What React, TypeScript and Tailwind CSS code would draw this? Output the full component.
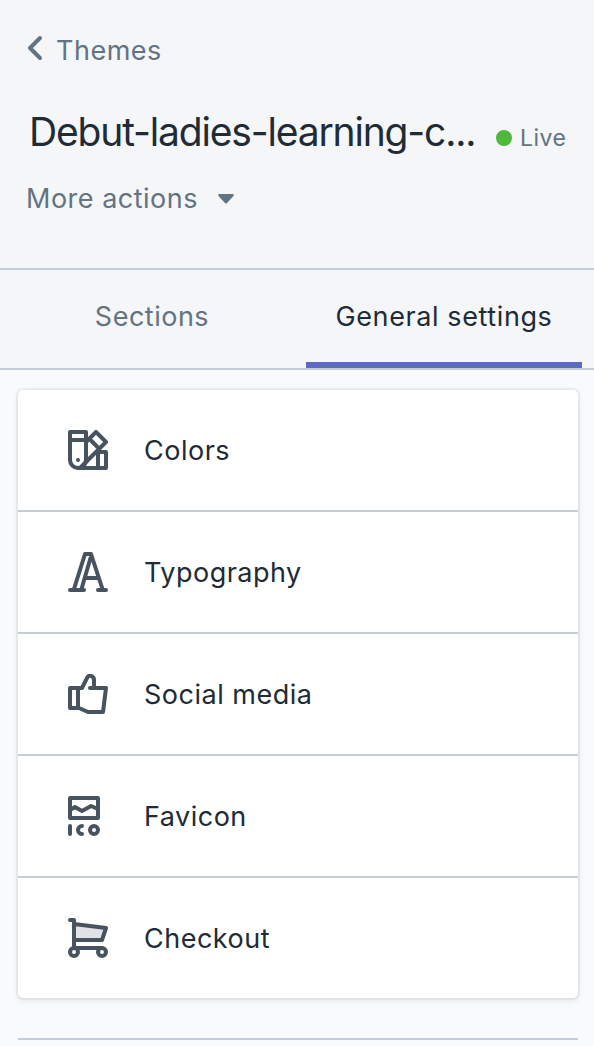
import type { ReactNode } from "react";

const iconProps = {
  width: 40,
  height: 40,
  viewBox: "0 0 40 40",
  fill: "none",
  stroke: "#47535f",
  strokeWidth: 4,
  strokeLinecap: "round" as const,
  strokeLinejoin: "round" as const,
  "aria-hidden": true,
};

const ColorsIcon = () => (
  <svg {...iconProps}>
    <path d="M2 2h16v28a8 8 0 0 1-8 8a8 8 0 0 1-8-8z" />
    <path d="M2 10h16M10 38h28V22h-8M30 22v16" />
    <path d="M18 12L28 2l10 10L14 36M21 8.500l10 10" />
    <circle cx="10" cy="30" r="2" fill="#47535f" stroke="none" />
  </svg>
);

const TypographyIcon = () => (
  <svg {...iconProps}>
    <path d="M2 38h14M30 38h8M6 37L17 2h6L34.500 37M13.500 37L22.500 6M18 26h12" />
  </svg>
);

const ThumbIcon = () => (
  <svg {...iconProps}>
    <path d="M2 14h12l5-10c2-4 7-2 7 2v8M10 14v20M2 14v20h9l9 4h15l3-24H22" />
  </svg>
);

const FaviconIcon = () => (
  <svg {...iconProps}>
    <path d="M2 2h28v20H2zM2 14l5-3 7 4 9-5 7 3M2 30v8M14 30a4 4 0 0 0 0 8" />
    <circle cx="26" cy="34" r="4" />
  </svg>
);

const CartIcon = () => (
  <svg {...iconProps}>
    <path d="M6 6l32 4-4 12H6z" fill="#dfe3e8" />
    <path d="M2 2h4v28M6 30h28" />
    <circle cx="6" cy="34" r="4" fill="white" />
    <circle cx="34" cy="34" r="4" fill="white" />
  </svg>
);

const settings: { label: string; icon: ReactNode }[] = [
  { label: "Colors", icon: <ColorsIcon /> },
  { label: "Typography", icon: <TypographyIcon /> },
  { label: "Social media", icon: <ThumbIcon /> },
  { label: "Favicon", icon: <FaviconIcon /> },
  { label: "Checkout", icon: <CartIcon /> },
];

export default function App() {
  return (
    <div className="flex h-[1046px] w-[594px] flex-col overflow-hidden bg-[#f9fafc] font-[Inter,sans-serif] text-[27px] leading-[40px] tracking-[0.5px] text-[#212b36]">
      <header className="flex h-[270px] shrink-0 flex-col border-b-2 border-[#c4cdda] bg-[#f4f6f8] text-[#637381]">
        <a className="mt-[30px] flex h-[40px] items-center pl-[26px]">
          <svg width="18" height="26" viewBox="0 0 18 26" className="-mt-1 mr-[12px]" fill="none" stroke="#637381" strokeWidth="4" strokeLinecap="round" strokeLinejoin="round" aria-hidden>
            <path d="M14 3L4 13l10 10" />
          </svg>
          <span className="pt-px">Themes</span>
        </a>
        <div className="mt-[34px] flex h-[56px] items-center pl-[29px]">
          <h1 className="w-[467px] whitespace-nowrap pb-px text-[39px] leading-[56px] tracking-[-1.17px] text-[#212b36]">Debut-ladies-learning-c...</h1>
          <span className="mt-[11px] mr-[8px] size-4 shrink-0 rounded-full bg-[#50b83c]" />
          <span className="mt-[12px] text-[23px] leading-[32px]">Live</span>
        </div>
        <button className="mt-[18px] flex h-[40px] items-center pl-[26px]">
          <span className="pt-px">More actions</span>
          <svg width="18" height="12" viewBox="0 0 18 12" className="ml-[19px] mt-px" aria-hidden>
            <path d="M2 1h14q1.500 .5 .5 2L10 10q-1 1-2 0L1.500 3Q.5 1.500 2 1z" fill="#637381" />
          </svg>
        </button>
      </header>
      <nav className="flex h-[100px] shrink-0 border-b-2 border-[#c4cdd5] bg-[#f4f6f8] px-[12px]">
        <button className="w-[280px] shrink-0 pb-[4px] text-[#637381]">Sections</button>
        <button className="ml-[14px] w-[276px] shrink-0 border-b-[6px] border-[#5c6ac4] pt-[2px] tracking-[0.6px]">General settings</button>
      </nav>
      <main className="px-[18px] pt-[20px] pr-[16px]">
        <ul className="divide-y-2 divide-[#c4cdd5] rounded-[5px] bg-white shadow-[0_0_0_2px_rgba(63,63,68,0.06),0_2px_6px_0_rgba(63,63,68,0.12)]">
          {settings.map((item) => (
            <li key={item.label} className="box-content flex h-[120px] items-center gap-[36px] pl-[50px]">
              {item.icon}
              <span className="pt-px">{item.label}</span>
            </li>
          ))}
        </ul>
        <div className="mt-[40px] h-[2px] bg-[#c4cdd9]" />
      </main>
    </div>
  );
}
